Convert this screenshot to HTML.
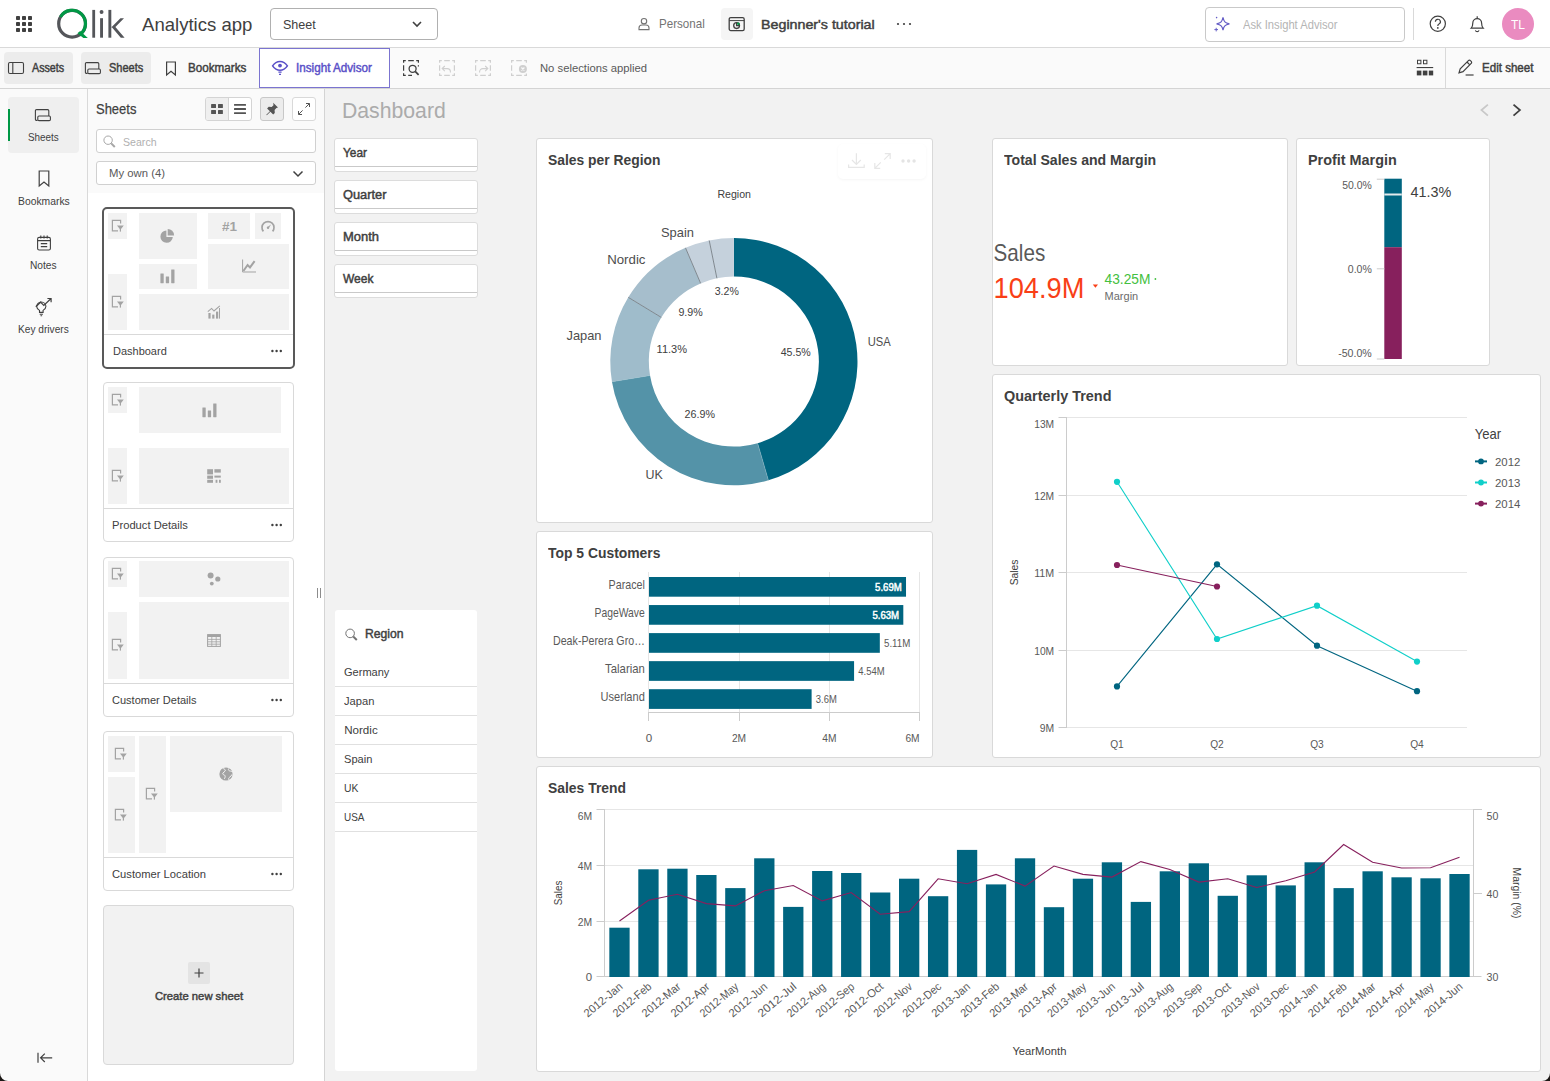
<!DOCTYPE html>
<html lang="en"><head><meta charset="utf-8"><title>Beginner's tutorial - Dashboard | Qlik Analytics app</title>
<style>
*{box-sizing:border-box;margin:0;padding:0}
html,body{width:1550px;height:1081px;overflow:hidden;background:#f2f2f2}
body{font-family:"Liberation Sans",sans-serif;color:#404040;position:relative}
.a{position:absolute}
.t{position:absolute;white-space:nowrap;transform-origin:0 0}
svg{position:absolute;overflow:visible}
svg text{font-family:"Liberation Sans",sans-serif}
#topbar{left:0;top:0;width:1550px;height:48px;background:#fff;border-bottom:1px solid #d9d9d9}
#toolbar{left:0;top:48px;width:1550px;height:41px;background:#fafafa;border-bottom:1px solid #d4d4d4}
#nav{left:0;top:89px;width:88px;height:992px;background:#fafafa;border-right:1px solid #d9d9d9}
#sheets{left:88px;top:89px;width:237px;height:992px;background:#fff;border-right:1px solid #d4d4d4}
#sheetshead{left:0;top:0;width:236px;height:104px;background:#fafafa}
#main{left:325px;top:89px;width:1225px;height:992px;background:#f2f2f2}
.btn{border-radius:4px;background:#ececec}
.box{background:#fff;border:1px solid #c4c4c4;border-radius:4px}
.card{background:#fff;border:1px solid #d9d9d9;border-radius:4px}
.cell{background:#f2f2f2}
.panel{background:#fff;border:1px solid #d9d9d9;border-radius:3px}
.filter{background:#fff;border:1px solid #dcdcdc;border-radius:3px}
.filter i{position:absolute;left:0;right:0;top:27px;height:1px;background:#c9c9c9}
.row{position:absolute;left:0;width:142px;height:1px;background:#e0e0e0}
</style></head><body>

<div id="topbar" class="a">
<svg width="48" height="48" style="left:0;top:0" fill="#404040"><rect x="16" y="16" width="4" height="4" rx="0.8"/><rect x="16" y="22" width="4" height="4" rx="0.8"/><rect x="16" y="28" width="4" height="4" rx="0.8"/><rect x="22" y="16" width="4" height="4" rx="0.8"/><rect x="22" y="22" width="4" height="4" rx="0.8"/><rect x="22" y="28" width="4" height="4" rx="0.8"/><rect x="28" y="16" width="4" height="4" rx="0.8"/><rect x="28" y="22" width="4" height="4" rx="0.8"/><rect x="28" y="28" width="4" height="4" rx="0.8"/></svg>
<svg width="80" height="48" style="left:50px;top:0">
<circle cx="22.1" cy="23.7" r="13.4" fill="none" stroke="#54565a" stroke-width="3.2"/>
<path d="M10.5 17.0 A13.4 13.4 0 1 1 29.6 34.8" fill="none" stroke="#009845" stroke-width="3.2"/>
<path d="M27.4 33.2 L30.2 31 L37.8 37.900 L33.4 37.900Z" fill="#009845"/>
<g fill="#54565a"><rect x="42.3" y="9.9" width="2.8" height="27.8"/><rect x="50.1" y="18.2" width="2.9" height="19.5"/><circle cx="51.55" cy="12" r="1.95"/><rect x="58.4" y="9.9" width="2.9" height="27.8"/>
<path d="M61.2 27.6 L70.4 18.2 L74 18.2 L65.4 27.1 L74.6 37.7 L70.8 37.7 L61.2 26.4z"/></g>
</svg>
<span class="t" style="left:142.30px;top:15px;font-size:19px;line-height:19px;transform:scaleX(0.9769);">Analytics app</span>
<div class="a box" style="left:270px;top:8px;width:168px;height:32px;border-color:#b0b0b0"></div>
<span class="t" style="left:283.00px;top:18px;font-size:13.4px;line-height:13.4px;transform:scaleX(0.9366);">Sheet</span>
<svg width="12" height="8" style="left:411px;top:20px"><path d="M2 2 L6 6 L10 2" fill="none" stroke="#404040" stroke-width="1.6"/></svg>
<svg width="14" height="14" style="left:637px;top:17px" fill="none" stroke="#737373" stroke-width="1.1"><circle cx="7" cy="4.2" r="2.7"/><path d="M2 12.6 v-1.6 a3 3 0 0 1 3 -3 h4 a3 3 0 0 1 3 3 v1.6z"/></svg>
<span class="t" style="left:658.70px;top:18px;font-size:12.4px;line-height:12.4px;color:#737373;transform:scaleX(0.9358);">Personal</span>
<div class="a" style="left:721px;top:8px;width:32px;height:32px;border-radius:4px;background:#f5f5f5"></div>
<svg width="18" height="16" style="left:728px;top:16px" fill="none" stroke="#404040" stroke-width="1.3"><rect x="1.2" y="1.6" width="15" height="13" rx="1.6"/><path d="M1.2 4.6h15" stroke-width="1"/><circle cx="8.6" cy="9.6" r="2.9"/><path d="M8.6 6.7v2.9h2.9" /><circle cx="10.4" cy="7.8" r="1.3" fill="#009845" stroke="none"/></svg>
<span class="t" style="left:761.20px;top:18px;font-size:13.4px;line-height:13.4px;-webkit-text-stroke:0.45px;transform:scaleX(1.0651);">Beginner&#x27;s tutorial</span>
<svg width="20" height="6" style="left:895px;top:21px" fill="#404040"><circle cx="3" cy="3" r="1.1"/><circle cx="9" cy="3" r="1.1"/><circle cx="15" cy="3" r="1.1"/></svg>
<div class="a box" style="left:1205px;top:7px;width:200px;height:35px;border-color:#c9c9c9"></div>
<svg width="20" height="20" style="left:1212px;top:14px" fill="none" stroke="#655dc6" stroke-width="1.2"><path d="M11 3.4 C11.8 7.6 13 8.8 17.4 9.8 C13 10.8 11.8 12 11 16.2 C10.2 12 9 10.8 4.6 9.8 C9 8.8 10.2 7.6 11 3.4z"/><path d="M2.4 15.6h3.6M4.2 13.8v3.6" stroke-width="1"/><circle cx="4.6" cy="3.6" r="0.8" fill="#655dc6" stroke="none"/></svg>
<span class="t" style="left:1242.80px;top:19px;font-size:12.4px;line-height:12.4px;color:#b5b5b5;transform:scaleX(0.9030);">Ask Insight Advisor</span>
<div class="a" style="left:1413px;top:8px;width:1px;height:32px;background:#d9d9d9"></div>
<svg width="20" height="20" style="left:1428px;top:14px" fill="none" stroke="#404040" stroke-width="1.2"><circle cx="9.8" cy="9.8" r="7.6"/><path d="M7.4 7.8a2.5 2.5 0 1 1 3.6 2.2c-.9.5-1.2.9-1.2 1.9" /><circle cx="9.8" cy="13.9" r="0.9" fill="#404040" stroke="none"/></svg>
<svg width="18" height="20" style="left:1468px;top:14px" fill="none" stroke="#404040" stroke-width="1.2"><path d="M3.2 14.2c1.2-1.2 1.6-2.6 1.6-5.2a4.4 4.4 0 0 1 8.8 0c0 2.6.4 4 1.6 5.2z"/><path d="M7.4 16.4a1.9 1.9 0 0 0 3.6 0" /><path d="M9.2 2.2v2" /></svg>
<div class="a" style="left:1502px;top:8px;width:32px;height:32px;border-radius:16px;background:#ea8bc0"></div>
<span class="t" style="left:1510.80px;top:19px;font-size:12.6px;line-height:12.6px;color:#fff;transform:scaleX(0.9521);">TL</span>
</div>
<div id="toolbar" class="a">
<div class="a btn" style="left:4px;top:4px;width:69px;height:32px"></div>
<svg width="18" height="14" style="left:7px;top:13px" fill="none" stroke="#404040" stroke-width="1.1"><rect x="1.5" y="1.5" width="15" height="11" rx="1.4"/><path d="M5.8 1.5v11"/></svg>
<span class="t" style="left:32.00px;top:14px;font-size:12.2px;line-height:12.2px;-webkit-text-stroke:0.45px;transform:scaleX(0.8795);">Assets</span>
<div class="a btn" style="left:81px;top:4px;width:70px;height:32px"></div>
<svg width="18" height="14" style="left:84px;top:13px" fill="none" stroke="#404040" stroke-width="1.1"><path d="M3.6 12.4h-1a1.2 1.2 0 0 1-1.2-1.2v-8.4a1.2 1.2 0 0 1 1.2-1.2h11a1.2 1.2 0 0 1 1.2 1.2v5.2"/><rect x="3.8" y="8" width="12.6" height="4.6" rx="1.2"/></svg>
<span class="t" style="left:108.70px;top:14px;font-size:12.2px;line-height:12.2px;-webkit-text-stroke:0.45px;transform:scaleX(0.9030);">Sheets</span>
<svg width="12" height="16" style="left:165px;top:13px" fill="none" stroke="#404040" stroke-width="1.2"><path d="M1.6 1h8.8v13l-4.4-3.6-4.4 3.6z"/></svg>
<span class="t" style="left:187.50px;top:14px;font-size:12.2px;line-height:12.2px;-webkit-text-stroke:0.45px;transform:scaleX(0.9571);">Bookmarks</span>
<div class="a" style="left:259px;top:0px;width:131px;height:40px;background:#fff;border:1px solid #7b74d0"></div>
<svg width="18" height="18" style="left:271px;top:11px" fill="none" stroke="#5a50c8" stroke-width="1.5"><path d="M1.6 6.8c2-3 4.6-4.4 7.4-4.4s5.4 1.4 7.4 4.4c-2 3-4.6 4.4-7.4 4.4s-5.400-1.400-7.400-4.400z"/><circle cx="9" cy="6.600" r="1.900" fill="#5a50c8" stroke="none"/><path d="M7.4 13.2h3.200M8 15.400h2" stroke-width="1.200"/></svg>
<span class="t" style="left:296.40px;top:14px;font-size:12.2px;line-height:12.2px;-webkit-text-stroke:0.45px;color:#5a50c8;transform:scaleX(0.9579);">Insight Advisor</span>
<svg width="18" height="18" style="left:403px;top:12px" fill="none" stroke="#404040" stroke-width="1.2"><path d="M.6 2.8V.6H2.8M5.2 .6H10.8M13.2 .6H15.4V2.8M15.4 5.2V6.4M9 15.4H5.2M2.8 15.4H.6V13.2M.6 10.800V5.2"/><circle cx="9.6" cy="8.800" r="3.500" stroke-width="1.300"/><path d="M12.200 11.400l3.400 3.400" stroke-width="1.700"/></svg>
<svg width="18" height="18" style="left:439px;top:12px" fill="none" stroke="#cfcfcf" stroke-width="1.2"><path d="M.6 2.8V.6H2.8M5.2 .6H10.8M13.2 .6H15.4V2.8M15.4 5.2V10.8M15.4 13.2V15.4H13.2M10.8 15.4H5.2M2.8 15.4H.6V13.2M.6 10.800V5.2"/><path d="M5.800 6l-2.600 2.600 2.600 2.600M3.400 8.600h4.800a3.200 3.200 0 0 1 3.200 3.200v.6" stroke-width="1.100"/></svg>
<svg width="18" height="18" style="left:475px;top:12px" fill="none" stroke="#cfcfcf" stroke-width="1.2"><path d="M.6 2.8V.6H2.8M5.2 .6H10.8M13.2 .6H15.4V2.8M15.4 5.2V10.8M15.4 13.2V15.4H13.2M10.8 15.4H5.2M2.8 15.4H.6V13.2M.6 10.800V5.2"/><path d="M10.200 6l2.600 2.600-2.600 2.600M12.600 8.600h-4.800a3.200 3.200 0 0 0-3.200 3.200v.6" stroke-width="1.100"/></svg>
<svg width="18" height="18" style="left:511px;top:12px" fill="none" stroke="#cfcfcf" stroke-width="1.2"><path d="M.6 2.8V.6H2.8M5.2 .6H10.8M13.2 .6H15.4V2.8M15.4 13.600V15.4H13.2M10.8 15.4H5.2M2.8 15.4H.6V13.2M.6 10.800V5.2"/><circle cx="11.900" cy="9" r="4" fill="#cfcfcf" stroke="none"/><path d="M10.400 7.500l3 3M13.400 7.500l-3 3" stroke="#fafafa" stroke-width="1.200"/></svg>
<span class="t" style="left:539.60px;top:14px;font-size:11.6px;line-height:11.6px;color:#595959;transform:scaleX(0.9703);">No selections applied</span>
<svg width="18" height="18" style="left:1416px;top:11px" fill="#404040"><path d="M1 .8h4.400v4.400H1zm1 1v2.400h2.400V1.800zM7 .8h4.400v4.400H7zm1 1v2.400h2.400V1.800z"/><rect x="0.600" y="8" width="16.600" height="1.100"/><rect x="0.800" y="11.600" width="4.600" height="4.800"/><rect x="6.800" y="11.600" width="4.600" height="4.800"/><rect x="12.800" y="11.600" width="4.400" height="4.800"/></svg>
<div class="a" style="left:1445px;top:0;width:1px;height:40px;background:#d9d9d9"></div>
<svg width="18" height="18" style="left:1457px;top:11px" fill="none" stroke="#404040" stroke-width="1.200"><path d="M2 13.800l1.200-4 8.200-8.200a1.400 1.400 0 0 1 2 0l.8.800a1.400 1.400 0 0 1 0 2l-8.200 8.200z"/><path d="M10 3l2.800 2.800"/><path d="M8.600 16h8"/></svg>
<span class="t" style="left:1481.80px;top:14px;font-size:12.2px;line-height:12.2px;-webkit-text-stroke:0.45px;transform:scaleX(0.9492);">Edit sheet</span>
</div>
<div id="nav" class="a">
<div class="a" style="left:8px;top:8px;width:71px;height:56px;border-radius:4px;background:#efefef"></div>
<div class="a" style="left:8px;top:20px;width:2px;height:32px;background:#009845"></div>
<svg width="18" height="14" style="left:34px;top:19px" fill="none" stroke="#404040" stroke-width="1.100"><path d="M3.600 12.400h-1a1.200 1.200 0 0 1-1.200-1.200v-8.400a1.200 1.200 0 0 1 1.200-1.200h11a1.200 1.200 0 0 1 1.200 1.200v5.200"/><rect x="3.800" y="8" width="12.600" height="4.600" rx="1.200"/></svg>
<span class="t" style="left:28.20px;top:43px;font-size:11.4px;line-height:11.4px;transform:scaleX(0.8678);">Sheets</span>
<svg width="12" height="18" style="left:37.500px;top:81px" fill="none" stroke="#404040" stroke-width="1.200"><path d="M1.200 1h9.600v15l-4.800-4-4.800 4z"/></svg>
<span class="t" style="left:17.50px;top:107px;font-size:11.4px;line-height:11.4px;transform:scaleX(0.9085);">Bookmarks</span>
<svg width="16" height="18" style="left:35.500px;top:144.5px" fill="none" stroke="#404040" stroke-width="1.100"><rect x="1.600" y="3.400" width="12.800" height="12.600" rx="1.600"/><path d="M1.600 6.600h12.800M4.800 1.600v2.800M8 1.600v2.800M11.200 1.600v2.800M4.800 9.600h6.400M4.800 12.600h6.400"/></svg>
<span class="t" style="left:30.30px;top:171px;font-size:11.4px;line-height:11.4px;transform:scaleX(0.8932);">Notes</span>
<svg width="18" height="20" style="left:34.500px;top:207.5px" fill="none" stroke="#404040" stroke-width="1.100"><path d="M4.500 15.400V13.400C2.800 12.400 1.700 11 1.700 9.600A4.600 4.600 0 0 1 10.900 9.600C10.900 11 9.800 12.400 8.100 13.400V15.400ZM4.700 17.200h3.200M5.500 18.800h1.600"/><path d="M.800 9.800l4.700-4.600 3.300 3.300 7-6.700M12.400 1.500h3.700v3.700" stroke-width="1.200"/></svg>
<span class="t" style="left:18.20px;top:235px;font-size:11.4px;line-height:11.4px;transform:scaleX(0.8909);">Key drivers</span>
<svg width="16" height="12" style="left:36.500px;top:962.5px" fill="none" stroke="#404040" stroke-width="1.200"><path d="M1 .800v10M3.600 5.800h11.600M7.800 1.600L3.600 5.800l4.200 4.200"/></svg>
</div>
<div id="sheets" class="a">
<div id="sheetshead" class="a"></div>
<span class="t" style="left:8.00px;top:12px;font-size:15px;line-height:15px;transform:scaleX(0.8651);-webkit-text-stroke:0.25px;">Sheets</span>
<div class="a " style="left:117.0px;top:8.0px;width:47.0px;height:24.0px;border:1px solid #d4d4d4;border-radius:3px;background:#fff"></div>
<div class="a " style="left:118.0px;top:9.0px;width:23.0px;height:22.0px;background:#efefef;border-radius:2px 0 0 2px;border-right:1px solid #d4d4d4"></div>
<svg width="14" height="12" style="left:123.0px;top:15.0px" fill="#545454"><rect x="0.100" y="0" width="4.900" height="3.900" rx=".5"/><rect x="7" y="0" width="4.900" height="3.900" rx=".5"/><rect x="0.100" y="6" width="4.900" height="3.900" rx=".5"/><rect x="7" y="6" width="4.900" height="3.900" rx=".5"/></svg>
<svg width="14" height="12" style="left:146.0px;top:15.0px" fill="#545454"><rect x="0" y="0" width="12" height="1.850" rx=".5"/><rect x="0" y="4.100" width="12" height="1.850" rx=".5"/><rect x="0" y="8.200" width="12" height="1.850" rx=".5"/></svg>
<div class="a " style="left:172.0px;top:8.0px;width:24.0px;height:24.0px;border:1px solid #c8c8c8;border-radius:3px;background:#ececec"></div>
<svg width="14" height="14" style="left:176.8px;top:13.0px" fill="#545454"><path d="M8.200 .800l4.800 4.800-1.600.500-1.800 1.800.200 3-1.600 1.600-2.800-2.800-3.600 3.600-.500-.500 3.600-3.600-2.800-2.800 1.600-1.600 3 .200 1.800-1.800z"/></svg>
<div class="a " style="left:204.0px;top:8.0px;width:24.0px;height:24.0px;border:1px solid #d9d9d9;border-radius:3px;background:#fff"></div>
<svg width="14" height="14" style="left:209.0px;top:13.0px" fill="none" stroke="#545454" stroke-width="1"><path d="M9 1.500h3.500v3.500M12.300 1.700L8.400 5.600M5 12.500H1.500V9M1.700 12.300L5.600 8.400"/></svg>
<div class="a box" style="left:8.0px;top:40.0px;width:220.0px;height:24.0px;border-color:#d0d0d0;border-radius:3px"></div>
<svg width="14" height="14" style="left:15.0px;top:45.5px" fill="none" stroke="#a6a6a6" stroke-width="1"><circle cx="5.100" cy="5.200" r="4.200"/><path d="M8.200 8.400l3.600 3.600" stroke-width="2"/></svg>
<span class="t" style="left:35.30px;top:48px;font-size:11.4px;line-height:11.4px;color:#b0b0b0;transform:scaleX(0.9302);">Search</span>
<div class="a box" style="left:8.0px;top:72.0px;width:220.0px;height:24.0px;border-color:#d0d0d0;border-radius:3px"></div>
<span class="t" style="left:21.20px;top:78px;font-size:11.6px;line-height:11.6px;color:#595959;transform:scaleX(0.9762);">My own (4)</span>
<svg width="12" height="8" style="left:203.5px;top:80.5px" fill="none" stroke="#404040" stroke-width="1.500"><path d="M1.500 1.500L6 6l4.500-4.500"/></svg>
<div class="a " style="left:14.0px;top:118.0px;width:193.0px;height:162.0px;border:2px solid #595959;border-radius:5px;background:#fff"></div>
<div class="a cell" style="left:20.0px;top:124.0px;width:19.2px;height:26.2px;"></div><svg width="14" height="14" style="left:22.6px;top:130.1px" ><path d="M9.600 4.600V1.400H1.400v10.400h5.600" fill="none" stroke="#a3a3a3" stroke-width="1.200"/><path d="M6 6.400h6.800l-3.400 4.400z" fill="#a3a3a3"/><rect x="8.800" y="9" width="1.200" height="3.600" fill="#a3a3a3"/></svg>
<div class="a cell" style="left:50.8px;top:124.0px;width:57.9px;height:46.2px;"></div><svg width="15" height="15" style="left:72.2px;top:140.1px" ><path d="M6.400 1.400a6.200 6.200 0 1 0 6.400 6.500H6.400z" fill="#a3a3a3"/><path d="M7.700 0a6.400 6.400 0 0 1 6.400 6.400H7.700z" fill="#a3a3a3"/></svg>
<div class="a cell" style="left:120.3px;top:124.0px;width:42.2px;height:26.2px;"></div><span class="t" style="left:133.90px;top:132px;font-size:12.6px;line-height:12.6px;font-weight:700;color:#a3a3a3;transform:scaleX(1.0702);">#1</span>
<div class="a cell" style="left:166.7px;top:124.0px;width:26.6px;height:26.2px;"></div><svg width="14" height="14" style="left:173.0px;top:130.1px" ><path d="M2.400 12.400a6 6 0 1 1 9.200 0" fill="none" stroke="#a3a3a3" stroke-width="1.700"/><path d="M6 8.600l4.200-3.400-2.600 4.400z" fill="#a3a3a3"/><circle cx="7" cy="8.800" r="1.200" fill="#a3a3a3"/></svg>
<div class="a cell" style="left:120.3px;top:154.7px;width:80.7px;height:45.5px;"></div><svg width="16" height="14" style="left:152.7px;top:170.4px" ><path d="M1.600 .500v12.500h13.400" fill="none" stroke="#a3a3a3" stroke-width="1"/><path d="M2.400 12l4.200-6 2.400 2.400 4.600-6.200" fill="none" stroke="#a3a3a3" stroke-width="2"/></svg>
<div class="a cell" style="left:50.8px;top:174.7px;width:57.9px;height:25.5px;"></div><svg width="15" height="15" style="left:72.2px;top:179.8px" ><rect x=".400" y="4.400" width="3.300" height="9.800" rx=".4" fill="#a3a3a3"/><rect x="5.800" y="7.400" width="3.300" height="6.800" rx=".4" fill="#a3a3a3"/><rect x="11.200" y=".400" width="3.300" height="13.800" rx=".4" fill="#a3a3a3"/></svg>
<div class="a cell" style="left:20.0px;top:184.7px;width:19.2px;height:56.0px;"></div><svg width="14" height="14" style="left:22.6px;top:205.7px" ><path d="M9.600 4.600V1.400H1.400v10.400h5.600" fill="none" stroke="#a3a3a3" stroke-width="1.200"/><path d="M6 6.400h6.800l-3.400 4.400z" fill="#a3a3a3"/><rect x="8.800" y="9" width="1.200" height="3.600" fill="#a3a3a3"/></svg>
<div class="a cell" style="left:50.8px;top:205.2px;width:150.2px;height:35.5px;"></div><svg width="14" height="14" style="left:118.9px;top:215.9px" ><rect x="1.400" y="8" width="2.200" height="5.600" fill="#a3a3a3"/><rect x="5.200" y="9.600" width="2.200" height="4" fill="#a3a3a3"/><rect x="9" y="6.600" width="2.200" height="7" fill="#a3a3a3"/><path d="M.800 6.600l3.800-3.200 2.400 2.600 5.800-5.200" fill="none" stroke="#a3a3a3" stroke-width="1.100"/><rect x="12" y="3" width="1" height="10.600" fill="#a3a3a3"/></svg>
<div class="a " style="left:16.0px;top:245.0px;width:189.0px;height:1.0px;background:#d9d9d9"></div>
<span class="t" style="left:24.50px;top:257px;font-size:11.4px;line-height:11.4px;transform:scaleX(0.9646);">Dashboard</span>
<svg width="12" height="4" style="left:183.2px;top:260.0px" fill="#404040"><circle cx="1.400" cy="2" r="1.200"/><circle cx="5.600" cy="2" r="1.200"/><circle cx="9.800" cy="2" r="1.200"/></svg>
<div class="a card" style="left:15.0px;top:293.0px;width:191.0px;height:160.0px;"></div>
<div class="a cell" style="left:20.2px;top:298.3px;width:18.7px;height:25.3px;"></div><svg width="14" height="14" style="left:22.6px;top:304.0px" ><path d="M9.600 4.600V1.400H1.400v10.400h5.600" fill="none" stroke="#a3a3a3" stroke-width="1.200"/><path d="M6 6.400h6.800l-3.400 4.400z" fill="#a3a3a3"/><rect x="8.800" y="9" width="1.200" height="3.600" fill="#a3a3a3"/></svg>
<div class="a cell" style="left:50.5px;top:298.3px;width:142.9px;height:46.0px;"></div><svg width="15" height="15" style="left:114.3px;top:313.7px" ><rect x=".400" y="4.400" width="3.300" height="9.800" rx=".4" fill="#a3a3a3"/><rect x="5.800" y="7.400" width="3.300" height="6.800" rx=".4" fill="#a3a3a3"/><rect x="11.200" y=".400" width="3.300" height="13.800" rx=".4" fill="#a3a3a3"/></svg>
<div class="a cell" style="left:20.2px;top:358.6px;width:18.7px;height:56.3px;"></div><svg width="14" height="14" style="left:22.6px;top:379.8px" ><path d="M9.600 4.600V1.400H1.400v10.400h5.600" fill="none" stroke="#a3a3a3" stroke-width="1.200"/><path d="M6 6.400h6.800l-3.400 4.400z" fill="#a3a3a3"/><rect x="8.800" y="9" width="1.200" height="3.600" fill="#a3a3a3"/></svg>
<div class="a cell" style="left:50.5px;top:358.6px;width:150.5px;height:56.3px;"></div><svg width="14" height="14" style="left:118.8px;top:379.8px" ><rect x=".200" y=".200" width="5.800" height="5.200" fill="#a3a3a3"/><rect x="7.400" y=".200" width="6.400" height="3.400" fill="#a3a3a3"/><rect x=".200" y="6.600" width="5.800" height="3.200" fill="#a3a3a3"/><rect x=".200" y="10.800" width="5.800" height="3" fill="#a3a3a3"/><rect x="7.400" y="6.600" width="6.400" height="2" fill="#a3a3a3"/><rect x="8.600" y="10.800" width="1.800" height="3" fill="#a3a3a3"/><rect x="12" y="10.800" width="1.800" height="3" fill="#a3a3a3"/></svg>
<div class="a " style="left:16.0px;top:419.0px;width:189.0px;height:1.0px;background:#d9d9d9"></div>
<span class="t" style="left:24.20px;top:431px;font-size:11.4px;line-height:11.4px;transform:scaleX(0.9819);">Product Details</span>
<svg width="12" height="4" style="left:183.2px;top:434.0px" fill="#404040"><circle cx="1.400" cy="2" r="1.200"/><circle cx="5.600" cy="2" r="1.200"/><circle cx="9.800" cy="2" r="1.200"/></svg>
<div class="a card" style="left:15.0px;top:467.5px;width:191.0px;height:160.0px;"></div>
<div class="a cell" style="left:20.2px;top:471.8px;width:18.7px;height:26.3px;"></div><svg width="14" height="14" style="left:22.6px;top:478.0px" ><path d="M9.600 4.600V1.400H1.400v10.400h5.600" fill="none" stroke="#a3a3a3" stroke-width="1.200"/><path d="M6 6.400h6.800l-3.400 4.400z" fill="#a3a3a3"/><rect x="8.800" y="9" width="1.200" height="3.600" fill="#a3a3a3"/></svg>
<div class="a cell" style="left:50.5px;top:471.8px;width:150.5px;height:36.6px;"></div><svg width="14" height="14" style="left:118.8px;top:483.1px" ><circle cx="3.600" cy="3.400" r="3" fill="#a3a3a3"/><circle cx="10.800" cy="7" r="2.600" fill="#a3a3a3"/><circle cx="4.800" cy="11.600" r="1.900" fill="#a3a3a3"/></svg>
<div class="a cell" style="left:20.2px;top:523.1px;width:18.7px;height:66.6px;"></div><svg width="14" height="14" style="left:22.6px;top:549.4px" ><path d="M9.600 4.600V1.400H1.400v10.400h5.600" fill="none" stroke="#a3a3a3" stroke-width="1.200"/><path d="M6 6.400h6.800l-3.400 4.400z" fill="#a3a3a3"/><rect x="8.800" y="9" width="1.200" height="3.600" fill="#a3a3a3"/></svg>
<div class="a cell" style="left:50.5px;top:513.1px;width:150.5px;height:76.6px;"></div><svg width="14" height="13" style="left:118.8px;top:544.9px" ><rect x=".600" y=".600" width="12.800" height="11.800" fill="none" stroke="#a3a3a3" stroke-width="1"/><rect x=".600" y=".600" width="12.800" height="2.400" fill="#a3a3a3"/><path d="M.600 5.400h12.800M.600 7.800h12.800M.600 10.200h12.800M4.800 3v9.400M9.200 3v9.400" stroke="#a3a3a3" stroke-width=".800" fill="none"/></svg>
<div class="a " style="left:16.0px;top:594.0px;width:189.0px;height:1.0px;background:#d9d9d9"></div>
<span class="t" style="left:24.20px;top:606px;font-size:11.4px;line-height:11.4px;transform:scaleX(0.9677);">Customer Details</span>
<svg width="12" height="4" style="left:183.2px;top:609.0px" fill="#404040"><circle cx="1.400" cy="2" r="1.200"/><circle cx="5.600" cy="2" r="1.200"/><circle cx="9.800" cy="2" r="1.200"/></svg>
<div class="a card" style="left:15.0px;top:642.0px;width:191.0px;height:160.0px;"></div>
<div class="a cell" style="left:19.9px;top:647.0px;width:27.0px;height:35.8px;"></div><svg width="14" height="14" style="left:26.4px;top:657.9px" ><path d="M9.600 4.600V1.400H1.400v10.400h5.600" fill="none" stroke="#a3a3a3" stroke-width="1.200"/><path d="M6 6.400h6.800l-3.400 4.400z" fill="#a3a3a3"/><rect x="8.800" y="9" width="1.200" height="3.600" fill="#a3a3a3"/></svg>
<div class="a cell" style="left:19.9px;top:687.8px;width:27.0px;height:75.8px;"></div><svg width="14" height="14" style="left:26.4px;top:718.7px" ><path d="M9.600 4.600V1.400H1.400v10.400h5.600" fill="none" stroke="#a3a3a3" stroke-width="1.200"/><path d="M6 6.400h6.800l-3.400 4.400z" fill="#a3a3a3"/><rect x="8.800" y="9" width="1.200" height="3.600" fill="#a3a3a3"/></svg>
<div class="a cell" style="left:50.6px;top:647.0px;width:27.1px;height:116.6px;"></div><svg width="14" height="14" style="left:57.1px;top:698.3px" ><path d="M9.600 4.600V1.400H1.400v10.400h5.600" fill="none" stroke="#a3a3a3" stroke-width="1.200"/><path d="M6 6.400h6.800l-3.400 4.400z" fill="#a3a3a3"/><rect x="8.800" y="9" width="1.200" height="3.600" fill="#a3a3a3"/></svg>
<div class="a cell" style="left:81.7px;top:647.0px;width:111.9px;height:76.2px;"></div><svg width="14" height="14" style="left:130.7px;top:678.1px" ><circle cx="7" cy="7" r="6.600" fill="#a3a3a3"/><path d="M4.200 1.600c1.600.400 2.400 1.200 2 2.400s-2 1-2.400 2.200.800 1.600 1.800 2 .600 2.400-.200 3.600M9.800 1.400c-.800 1-.400 2 .600 2.400s2 .200 2.600 1.200M10 13c-.600-1.200-.400-2.200.600-2.800s1.800-1.400 2.400-2.800" fill="none" stroke="#f2f2f2" stroke-width="1"/></svg>
<div class="a " style="left:16.0px;top:768.0px;width:189.0px;height:1.0px;background:#d9d9d9"></div>
<span class="t" style="left:24.20px;top:780px;font-size:11.4px;line-height:11.4px;transform:scaleX(0.9824);">Customer Location</span>
<svg width="12" height="4" style="left:183.2px;top:783.0px" fill="#404040"><circle cx="1.400" cy="2" r="1.200"/><circle cx="5.600" cy="2" r="1.200"/><circle cx="9.800" cy="2" r="1.200"/></svg>
<div class="a " style="left:15.0px;top:816.0px;width:191.0px;height:160.0px;background:#f2f2f2;border:1px solid #d9d9d9;border-radius:4px"></div>
<div class="a " style="left:99.7px;top:873.2px;width:22.4px;height:21.8px;background:#e4e4e4;border-radius:2px"></div>
<svg width="10" height="10" style="left:105.9px;top:879.0px" fill="none" stroke="#404040" stroke-width="1.200"><path d="M5 .500v9M.500 5h9"/></svg>
<span class="t" style="left:66.60px;top:902px;font-size:11.4px;line-height:11.4px;-webkit-text-stroke:0.45px;transform:scaleX(0.9871);">Create new sheet</span>
<div class="a " style="left:229.0px;top:499.0px;width:1.0px;height:10.0px;background:#8c8c8c"></div>
<div class="a " style="left:232.0px;top:499.0px;width:1.0px;height:10.0px;background:#8c8c8c"></div>
</div>
<div id="main" class="a">
<span class="t" style="left:17.00px;top:11px;font-size:22.6px;line-height:22.6px;color:#ababab;transform:scaleX(0.9388);">Dashboard</span>
<svg width="10" height="14" style="left:1155px;top:14px" fill="none" stroke="#c8c8c8" stroke-width="1.800"><path d="M7.900 1.600L1.500 7.100l6.400 5.500"/></svg>
<svg width="10" height="14" style="left:1186px;top:14px" fill="none" stroke="#404040" stroke-width="1.800"><path d="M2.500 1.600L8.900 7.100l-6.400 5.500"/></svg>
<div class="a filter" style="left:9px;top:49px;width:144px;height:34px"><i></i></div>
<span class="t" style="left:18.00px;top:58px;font-size:12.4px;line-height:12.4px;-webkit-text-stroke:0.45px;transform:scaleX(0.9579);">Year</span>
<div class="a filter" style="left:9px;top:91px;width:144px;height:34px"><i></i></div>
<span class="t" style="left:18.00px;top:100px;font-size:12.4px;line-height:12.4px;-webkit-text-stroke:0.45px;transform:scaleX(1.0348);">Quarter</span>
<div class="a filter" style="left:9px;top:133px;width:144px;height:34px"><i></i></div>
<span class="t" style="left:18.00px;top:142px;font-size:12.4px;line-height:12.4px;-webkit-text-stroke:0.45px;transform:scaleX(1.0446);">Month</span>
<div class="a filter" style="left:9px;top:175px;width:144px;height:34px"><i></i></div>
<span class="t" style="left:18.00px;top:184px;font-size:12.4px;line-height:12.4px;-webkit-text-stroke:0.45px;transform:scaleX(0.9691);">Week</span>
<div class="a" style="left:10px;top:521px;width:142px;height:461px;background:#fff;border-radius:3px">
<div class="row" style="top:76.0px"></div>
<div class="row" style="top:105.0px"></div>
<div class="row" style="top:134.0px"></div>
<div class="row" style="top:163.0px"></div>
<div class="row" style="top:192.0px"></div>
<div class="row" style="top:221.0px"></div>
</div>
<svg width="14" height="14" style="left:19.5px;top:538.5px" fill="none" stroke="#737373" stroke-width="1"><circle cx="5.100" cy="5.400" r="4.300"/><path d="M8.200 8.600l3.600 3.400" stroke-width="2"/></svg>
<span class="t" style="left:40.00px;top:539px;font-size:12.4px;line-height:12.4px;-webkit-text-stroke:0.45px;transform:scaleX(0.9823);">Region</span>
<span class="t" style="left:19.20px;top:577px;font-size:11.6px;line-height:11.6px;transform:scaleX(0.9517);">Germany</span>
<span class="t" style="left:19.20px;top:606px;font-size:11.6px;line-height:11.6px;transform:scaleX(0.9618);">Japan</span>
<span class="t" style="left:19.20px;top:635px;font-size:11.6px;line-height:11.6px;">Nordic</span>
<span class="t" style="left:19.20px;top:664px;font-size:11.6px;line-height:11.6px;transform:scaleX(0.9572);">Spain</span>
<span class="t" style="left:19.20px;top:693px;font-size:11.6px;line-height:11.6px;transform:scaleX(0.8936);">UK</span>
<span class="t" style="left:19.20px;top:722px;font-size:11.6px;line-height:11.6px;transform:scaleX(0.8553);">USA</span>
<div class="a panel" style="left:211.0px;top:49.0px;width:397.0px;height:385.0px;"></div><span class="t" style="left:223.00px;top:64px;font-size:14.8px;line-height:14.8px;font-weight:700;transform:scaleX(0.9368);">Sales per Region</span>
<div class="a panel" style="left:211.0px;top:442.0px;width:397.0px;height:227.0px;"></div><span class="t" style="left:223.00px;top:457px;font-size:14.8px;line-height:14.8px;font-weight:700;transform:scaleX(0.9391);">Top 5 Customers</span>
<div class="a panel" style="left:667.0px;top:49.0px;width:296.0px;height:228.0px;"></div><span class="t" style="left:679.00px;top:64px;font-size:14.8px;line-height:14.8px;font-weight:700;transform:scaleX(0.9507);">Total Sales and Margin</span>
<div class="a panel" style="left:971.0px;top:49.0px;width:194.0px;height:228.0px;"></div><span class="t" style="left:983.00px;top:64px;font-size:14.8px;line-height:14.8px;font-weight:700;transform:scaleX(0.9730);">Profit Margin</span>
<div class="a panel" style="left:667.0px;top:285.0px;width:549.0px;height:384.0px;"></div><span class="t" style="left:679.00px;top:300px;font-size:14.8px;line-height:14.8px;font-weight:700;transform:scaleX(0.9754);">Quarterly Trend</span>
<div class="a panel" style="left:211.0px;top:677.0px;width:1005.0px;height:306.0px;"></div><span class="t" style="left:223.00px;top:692px;font-size:14.8px;line-height:14.8px;font-weight:700;transform:scaleX(0.9388);">Sales Trend</span>
<div class="a " style="left:513.0px;top:55.0px;width:88.0px;height:35.0px;background:#fff;border-radius:5px;box-shadow:0 1px 3px rgba(0,0,0,.045)"></div>
<svg width="80" height="20" style="left:521px;top:62px" fill="none" stroke="#e6e6e6" stroke-width="1.200">
<path d="M10.400 2.200V13.200M6 9l4.400 4.400 4.400-4.400M2.600 13.400v3h15.600v-3"/>
<path d="M38.800 2.600h5.400v5.400M44 2.800l-5.800 5.800M28.800 12v5.400h5.400M29 17.200l5.800-5.800"/>
</svg>
<svg width="20" height="6" style="left:575px;top:69px" fill="#e4e4e4"><circle cx="3" cy="3" r="1.700"/><circle cx="8.600" cy="3" r="1.700"/><circle cx="14.100" cy="3" r="1.700"/></svg>
<svg width="1225" height="992" style="left:0;top:0"><path d="M408.90 149.00A123.6 123.6 0 0 1 443.38 391.29L432.61 354.22A85.0 85.0 0 0 0 408.90 187.60Z" fill="#006580"/>
<path d="M443.38 391.29A123.6 123.6 0 0 1 286.95 292.70L325.03 286.42A85.0 85.0 0 0 0 432.61 354.22Z" fill="#5493a8"/>
<path d="M286.95 292.70A123.6 123.6 0 0 1 303.31 208.35L336.29 228.42A85.0 85.0 0 0 0 325.03 286.42Z" fill="#9fbccb"/>
<path d="M303.31 208.35A123.6 123.6 0 0 1 360.53 158.86L375.63 194.38A85.0 85.0 0 0 0 336.29 228.42Z" fill="#a6becc"/>
<path d="M360.53 158.86A123.6 123.6 0 0 1 384.22 151.49L391.92 189.31A85.0 85.0 0 0 0 375.63 194.38Z" fill="#c5d1dc"/>
<path d="M384.22 151.49A123.6 123.6 0 0 1 408.90 149.00L408.90 187.60A85.0 85.0 0 0 0 391.92 189.31Z" fill="#c5d1dc"/>
<path d="M443.38 391.29L432.61 354.22" stroke="#7fb0c0" stroke-width="0.6" fill="none"/>
<path d="M286.95 292.70L325.03 286.42" stroke="#9bbfcc" stroke-width="0.6" fill="none"/>
<path d="M303.31 208.35L336.29 228.42" stroke="#7f888f" stroke-width="1" fill="none"/>
<path d="M360.53 158.86L375.63 194.38" stroke="#7f888f" stroke-width="1" fill="none"/>
<path d="M384.22 151.49L391.92 189.31" stroke="#7f888f" stroke-width="1" fill="none"/>
<text x="392.40" y="109.00" font-size="11.6" fill="#404040" textLength="33.60" lengthAdjust="spacingAndGlyphs">Region</text>
<text x="542.80" y="256.60" font-size="13" fill="#4d4d4d" textLength="23.00" lengthAdjust="spacingAndGlyphs">USA</text>
<text x="336.00" y="147.80" font-size="13" fill="#4d4d4d" textLength="33.00" lengthAdjust="spacingAndGlyphs">Spain</text>
<text x="282.20" y="174.50" font-size="13" fill="#4d4d4d" textLength="38.30" lengthAdjust="spacingAndGlyphs">Nordic</text>
<text x="241.50" y="250.70" font-size="13" fill="#4d4d4d" textLength="35.00" lengthAdjust="spacingAndGlyphs">Japan</text>
<text x="320.50" y="390.00" font-size="13" fill="#4d4d4d" textLength="17.30" lengthAdjust="spacingAndGlyphs">UK</text>
<text x="455.70" y="266.80" font-size="11.4" fill="#404040" textLength="30.10" lengthAdjust="spacingAndGlyphs">45.5%</text>
<text x="389.70" y="206.00" font-size="11.4" fill="#404040" textLength="24.10" lengthAdjust="spacingAndGlyphs">3.2%</text>
<text x="353.40" y="226.90" font-size="11.4" fill="#404040" textLength="24.30" lengthAdjust="spacingAndGlyphs">9.9%</text>
<text x="331.60" y="263.60" font-size="11.4" fill="#404040" textLength="30.40" lengthAdjust="spacingAndGlyphs">11.3%</text>
<text x="359.60" y="328.70" font-size="11.4" fill="#404040" textLength="30.40" lengthAdjust="spacingAndGlyphs">26.9%</text>
<rect x="323" y="483" width="1" height="140" fill="#e6e6e6"/>
<rect x="414" y="483" width="1" height="140" fill="#e6e6e6"/>
<rect x="504" y="483" width="1" height="140" fill="#e6e6e6"/>
<rect x="594" y="483" width="1" height="140" fill="#e6e6e6"/>
<rect x="324.00" y="488.00" width="257.02" height="19.700" fill="#006580"/>
<text x="283.60" y="500.00" font-size="12.2" fill="#595959" textLength="36.20" lengthAdjust="spacingAndGlyphs">Paracel</text>
<text x="550.12" y="502.00" font-size="10.2" fill="#ffffff" textLength="26.70" lengthAdjust="spacingAndGlyphs" stroke="#ffffff" stroke-width="0.45">5.69M</text>
<rect x="324.00" y="516.05" width="254.31" height="19.700" fill="#006580"/>
<text x="269.50" y="528.00" font-size="12.2" fill="#595959" textLength="50.30" lengthAdjust="spacingAndGlyphs">PageWave</text>
<text x="547.41" y="530.00" font-size="10.2" fill="#ffffff" textLength="26.70" lengthAdjust="spacingAndGlyphs" stroke="#ffffff" stroke-width="0.45">5.63M</text>
<rect x="324.00" y="544.10" width="230.82" height="19.700" fill="#006580"/>
<text x="228.00" y="556.00" font-size="12.2" fill="#595959" textLength="91.80" lengthAdjust="spacingAndGlyphs">Deak-Perera Gro…</text>
<text x="559.02" y="558.00" font-size="10.2" fill="#595959" textLength="26.30" lengthAdjust="spacingAndGlyphs">5.11M</text>
<rect x="324.00" y="572.15" width="205.07" height="19.700" fill="#006580"/>
<text x="280.10" y="584.00" font-size="12.2" fill="#595959" textLength="39.70" lengthAdjust="spacingAndGlyphs">Talarian</text>
<text x="533.27" y="586.00" font-size="10.2" fill="#595959" textLength="26.30" lengthAdjust="spacingAndGlyphs">4.54M</text>
<rect x="324.00" y="600.20" width="162.61" height="19.700" fill="#006580"/>
<text x="275.60" y="612.00" font-size="12.2" fill="#595959" textLength="44.20" lengthAdjust="spacingAndGlyphs">Userland</text>
<text x="490.81" y="614.00" font-size="10.2" fill="#595959" textLength="21.00" lengthAdjust="spacingAndGlyphs">3.6M</text>
<rect x="323" y="623" width="272" height="1" fill="#cccccc"/>
<rect x="323" y="623" width="1" height="9" fill="#cccccc"/>
<rect x="414" y="623" width="1" height="9" fill="#cccccc"/>
<rect x="504" y="623" width="1" height="9" fill="#cccccc"/>
<rect x="594" y="623" width="1" height="9" fill="#cccccc"/>
<text x="320.77" y="653.00" font-size="11.6" fill="#595959">0</text>
<text x="406.90" y="653.00" font-size="11.6" fill="#595959" textLength="14.20" lengthAdjust="spacingAndGlyphs">2M</text>
<text x="497.30" y="653.00" font-size="11.6" fill="#595959" textLength="14.20" lengthAdjust="spacingAndGlyphs">4M</text>
<text x="580.40" y="653.00" font-size="11.6" fill="#595959" textLength="14.20" lengthAdjust="spacingAndGlyphs">6M</text>
<text x="668.60" y="172.00" font-size="23.4" fill="#595959" textLength="51.60" lengthAdjust="spacingAndGlyphs">Sales</text>
<text x="668.60" y="209.10" font-size="30" fill="#f93f17" textLength="90.80" lengthAdjust="spacingAndGlyphs">104.9M</text>
<path d="M767.8 195.60000000000002h5.2l-2.600 3.200z" fill="#f93f17"/>
<text x="779.60" y="194.60" font-size="14.4" fill="#44c040" textLength="45.80" lengthAdjust="spacingAndGlyphs">43.25M</text>
<circle cx="830.4000000000001" cy="190" r="0.900" fill="#44c040"/>
<text x="779.60" y="211.00" font-size="11.4" fill="#6b6b6b" textLength="33.60" lengthAdjust="spacingAndGlyphs">Margin</text>
<rect x="1059.3" y="89.69999999999999" width="17.500" height="68.500" fill="#006580"/>
<rect x="1059.3" y="158.2" width="17.500" height="111.800" fill="#87205d"/>
<rect x="1059.3" y="104.5" width="17.500" height="2" fill="#e4eaec"/>
<rect x="1051.8" y="89.70" width="7.500" height="1" fill="#cccccc"/>
<rect x="1051.8" y="179.30" width="7.500" height="1" fill="#cccccc"/>
<rect x="1051.8" y="269.50" width="7.500" height="1" fill="#cccccc"/>
<text x="1017.20" y="100.00" font-size="11.2" fill="#595959" textLength="29.60" lengthAdjust="spacingAndGlyphs">50.0%</text>
<text x="1022.80" y="183.80" font-size="11.2" fill="#595959" textLength="24.00" lengthAdjust="spacingAndGlyphs">0.0%</text>
<text x="1013.20" y="267.70" font-size="11.2" fill="#595959" textLength="33.60" lengthAdjust="spacingAndGlyphs">-50.0%</text>
<text x="1085.40" y="107.90" font-size="15" fill="#404040" textLength="40.80" lengthAdjust="spacingAndGlyphs">41.3%</text>
<rect x="742" y="328" width="400" height="1" fill="#e6e6e6"/>
<rect x="733.5" y="328" width="7.5" height="1" fill="#cccccc"/>
<text x="709.20" y="339.00" font-size="11.4" fill="#595959" textLength="20.00" lengthAdjust="spacingAndGlyphs">13M</text>
<rect x="742" y="406" width="400" height="1" fill="#e6e6e6"/>
<rect x="733.5" y="406" width="7.5" height="1" fill="#cccccc"/>
<text x="709.20" y="410.70" font-size="11.4" fill="#595959" textLength="20.00" lengthAdjust="spacingAndGlyphs">12M</text>
<rect x="742" y="483" width="400" height="1" fill="#e6e6e6"/>
<rect x="733.5" y="483" width="7.5" height="1" fill="#cccccc"/>
<text x="709.20" y="487.70" font-size="11.4" fill="#595959" textLength="20.00" lengthAdjust="spacingAndGlyphs">11M</text>
<rect x="742" y="561" width="400" height="1" fill="#e6e6e6"/>
<rect x="733.5" y="561" width="7.5" height="1" fill="#cccccc"/>
<text x="709.20" y="565.70" font-size="11.4" fill="#595959" textLength="20.00" lengthAdjust="spacingAndGlyphs">10M</text>
<rect x="742" y="638" width="400" height="1" fill="#e6e6e6"/>
<rect x="733.5" y="638" width="7.5" height="1" fill="#cccccc"/>
<text x="714.80" y="642.70" font-size="11.4" fill="#595959" textLength="14.40" lengthAdjust="spacingAndGlyphs">9M</text>
<rect x="741" y="328" width="1" height="311" fill="#cccccc"/>
<text x="785.20" y="659.20" font-size="11.4" fill="#595959" textLength="13.60" lengthAdjust="spacingAndGlyphs">Q1</text>
<text x="885.20" y="659.20" font-size="11.4" fill="#595959" textLength="13.60" lengthAdjust="spacingAndGlyphs">Q2</text>
<text x="985.20" y="659.20" font-size="11.4" fill="#595959" textLength="13.60" lengthAdjust="spacingAndGlyphs">Q3</text>
<text x="1085.20" y="659.20" font-size="11.4" fill="#595959" textLength="13.60" lengthAdjust="spacingAndGlyphs">Q4</text>
<polyline points="792.00,597.40 892.00,475.30 992.00,556.70 1092.00,602.20" fill="none" stroke="#006580" stroke-width="1.100"/>
<circle cx="792.00" cy="597.40" r="3.100" fill="#006580"/>
<circle cx="892.00" cy="475.30" r="3.100" fill="#006580"/>
<circle cx="992.00" cy="556.70" r="3.100" fill="#006580"/>
<circle cx="1092.00" cy="602.20" r="3.100" fill="#006580"/>
<polyline points="792.00,392.80 892.00,550.00 992.00,516.70 1092.00,572.60" fill="none" stroke="#10cfc9" stroke-width="1.100"/>
<circle cx="792.00" cy="392.80" r="3.100" fill="#10cfc9"/>
<circle cx="892.00" cy="550.00" r="3.100" fill="#10cfc9"/>
<circle cx="992.00" cy="516.70" r="3.100" fill="#10cfc9"/>
<circle cx="1092.00" cy="572.60" r="3.100" fill="#10cfc9"/>
<polyline points="792.00,476.00 892.00,497.50" fill="none" stroke="#87205d" stroke-width="1.100"/>
<circle cx="792.00" cy="476.00" r="3.100" fill="#87205d"/>
<circle cx="892.00" cy="497.50" r="3.100" fill="#87205d"/>
<g transform="translate(692.6,483.4) rotate(-90)"><text x="-12.90" y="0.00" font-size="10.6" fill="#404040" textLength="25.80" lengthAdjust="spacingAndGlyphs">Sales</text></g>
<text x="1149.80" y="349.50" font-size="14.2" fill="#404040" textLength="26.40" lengthAdjust="spacingAndGlyphs">Year</text>
<rect x="1150" y="371.40" width="12" height="2" fill="#006580"/>
<circle cx="1156" cy="372.40" r="2.900" fill="#006580"/>
<text x="1170.00" y="376.60" font-size="11.2" fill="#595959" textLength="25.40" lengthAdjust="spacingAndGlyphs">2012</text>
<rect x="1150" y="392.50" width="12" height="2" fill="#10cfc9"/>
<circle cx="1156" cy="393.50" r="2.900" fill="#10cfc9"/>
<text x="1170.00" y="397.70" font-size="11.2" fill="#595959" textLength="25.40" lengthAdjust="spacingAndGlyphs">2013</text>
<rect x="1150" y="413.60" width="12" height="2" fill="#87205d"/>
<circle cx="1156" cy="414.60" r="2.900" fill="#87205d"/>
<text x="1170.00" y="418.80" font-size="11.2" fill="#595959" textLength="25.40" lengthAdjust="spacingAndGlyphs">2014</text>
<rect x="280" y="720" width="868" height="1" fill="#e6e6e6"/>
<rect x="280" y="776" width="868" height="1" fill="#e6e6e6"/>
<rect x="280" y="832" width="868" height="1" fill="#e6e6e6"/>
<rect x="271.5" y="887" width="885.0" height="1" fill="#cccccc"/>
<rect x="284.33" y="838.70" width="20.300" height="49.30" fill="#006580"/>
<rect x="313.30" y="780.30" width="20.300" height="107.70" fill="#006580"/>
<rect x="342.27" y="779.70" width="20.300" height="108.30" fill="#006580"/>
<rect x="371.23" y="786.00" width="20.300" height="102.00" fill="#006580"/>
<rect x="400.20" y="799.10" width="20.300" height="88.90" fill="#006580"/>
<rect x="429.17" y="769.30" width="20.300" height="118.70" fill="#006580"/>
<rect x="458.13" y="817.90" width="20.300" height="70.10" fill="#006580"/>
<rect x="487.10" y="782.00" width="20.300" height="106.00" fill="#006580"/>
<rect x="516.07" y="784.00" width="20.300" height="104.00" fill="#006580"/>
<rect x="545.03" y="803.50" width="20.300" height="84.50" fill="#006580"/>
<rect x="574.00" y="789.70" width="20.300" height="98.30" fill="#006580"/>
<rect x="602.97" y="807.20" width="20.300" height="80.80" fill="#006580"/>
<rect x="631.93" y="760.90" width="20.300" height="127.10" fill="#006580"/>
<rect x="660.90" y="795.40" width="20.300" height="92.60" fill="#006580"/>
<rect x="689.87" y="769.30" width="20.300" height="118.70" fill="#006580"/>
<rect x="718.83" y="818.20" width="20.300" height="69.80" fill="#006580"/>
<rect x="747.80" y="789.70" width="20.300" height="98.30" fill="#006580"/>
<rect x="776.77" y="773.30" width="20.300" height="114.70" fill="#006580"/>
<rect x="805.73" y="812.90" width="20.300" height="75.10" fill="#006580"/>
<rect x="834.70" y="782.30" width="20.300" height="105.70" fill="#006580"/>
<rect x="863.67" y="774.30" width="20.300" height="113.70" fill="#006580"/>
<rect x="892.63" y="806.80" width="20.300" height="81.20" fill="#006580"/>
<rect x="921.60" y="786.30" width="20.300" height="101.70" fill="#006580"/>
<rect x="950.57" y="796.40" width="20.300" height="91.60" fill="#006580"/>
<rect x="979.53" y="773.30" width="20.300" height="114.70" fill="#006580"/>
<rect x="1008.50" y="799.10" width="20.300" height="88.90" fill="#006580"/>
<rect x="1037.47" y="782.30" width="20.300" height="105.70" fill="#006580"/>
<rect x="1066.43" y="788.30" width="20.300" height="99.70" fill="#006580"/>
<rect x="1095.40" y="789.30" width="20.300" height="98.70" fill="#006580"/>
<rect x="1124.37" y="785.00" width="20.300" height="103.00" fill="#006580"/>
<rect x="279" y="720" width="1" height="168" fill="#cccccc"/>
<rect x="1148" y="720" width="1" height="168" fill="#cccccc"/>
<rect x="271.5" y="720" width="7.5" height="1" fill="#cccccc"/>
<rect x="271.5" y="776" width="7.5" height="1" fill="#cccccc"/>
<rect x="271.5" y="832" width="7.5" height="1" fill="#cccccc"/>
<rect x="1149" y="720" width="8" height="1" fill="#cccccc"/>
<rect x="1149" y="804" width="8" height="1" fill="#cccccc"/>
<polyline points="294.48,832.00 323.45,811.20 352.42,805.20 381.38,814.60 410.35,816.90 439.32,801.80 468.28,796.50 497.25,811.90 526.22,803.50 555.18,825.30 584.15,822.60 613.12,789.80 642.08,794.80 671.05,785.40 700.02,797.10 728.98,777.00 757.95,785.40 786.92,788.10 815.88,772.60 844.85,780.40 873.82,793.10 902.78,789.80 931.75,798.50 960.72,791.80 989.68,783.00 1018.65,755.50 1047.62,773.30 1076.58,779.00 1105.55,778.70 1134.52,768.30" fill="none" stroke="#87205d" stroke-width="1.100"/>
<text x="252.80" y="731.00" font-size="11.4" fill="#595959" textLength="14.40" lengthAdjust="spacingAndGlyphs">6M</text>
<text x="252.80" y="780.60" font-size="11.4" fill="#595959" textLength="14.40" lengthAdjust="spacingAndGlyphs">4M</text>
<text x="252.80" y="836.60" font-size="11.4" fill="#595959" textLength="14.40" lengthAdjust="spacingAndGlyphs">2M</text>
<text x="260.86" y="892.00" font-size="11.4" fill="#595959">0</text>
<text x="1161.50" y="731.00" font-size="11.4" fill="#595959" textLength="11.80" lengthAdjust="spacingAndGlyphs">50</text>
<text x="1161.50" y="808.60" font-size="11.4" fill="#595959" textLength="11.80" lengthAdjust="spacingAndGlyphs">40</text>
<text x="1161.50" y="892.00" font-size="11.4" fill="#595959" textLength="11.80" lengthAdjust="spacingAndGlyphs">30</text>
<g transform="translate(298.48,898.80) rotate(-40)"><text x="-46.50" y="0.00" font-size="11.4" fill="#595959" textLength="46.50" lengthAdjust="spacingAndGlyphs">2012-Jan</text></g>
<g transform="translate(327.45,898.80) rotate(-40)"><text x="-46.50" y="0.00" font-size="11.4" fill="#595959" textLength="46.50" lengthAdjust="spacingAndGlyphs">2012-Feb</text></g>
<g transform="translate(356.42,898.80) rotate(-40)"><text x="-46.50" y="0.00" font-size="11.4" fill="#595959" textLength="46.50" lengthAdjust="spacingAndGlyphs">2012-Mar</text></g>
<g transform="translate(385.38,898.80) rotate(-40)"><text x="-46.50" y="0.00" font-size="11.4" fill="#595959" textLength="46.50" lengthAdjust="spacingAndGlyphs">2012-Apr</text></g>
<g transform="translate(414.35,898.80) rotate(-40)"><text x="-46.50" y="0.00" font-size="11.4" fill="#595959" textLength="46.50" lengthAdjust="spacingAndGlyphs">2012-May</text></g>
<g transform="translate(443.32,898.80) rotate(-40)"><text x="-46.50" y="0.00" font-size="11.4" fill="#595959" textLength="46.50" lengthAdjust="spacingAndGlyphs">2012-Jun</text></g>
<g transform="translate(472.28,898.80) rotate(-40)"><text x="-46.50" y="0.00" font-size="11.4" fill="#595959" textLength="46.50" lengthAdjust="spacingAndGlyphs">2012-Jul</text></g>
<g transform="translate(501.25,898.80) rotate(-40)"><text x="-46.50" y="0.00" font-size="11.4" fill="#595959" textLength="46.50" lengthAdjust="spacingAndGlyphs">2012-Aug</text></g>
<g transform="translate(530.22,898.80) rotate(-40)"><text x="-46.50" y="0.00" font-size="11.4" fill="#595959" textLength="46.50" lengthAdjust="spacingAndGlyphs">2012-Sep</text></g>
<g transform="translate(559.18,898.80) rotate(-40)"><text x="-46.50" y="0.00" font-size="11.4" fill="#595959" textLength="46.50" lengthAdjust="spacingAndGlyphs">2012-Oct</text></g>
<g transform="translate(588.15,898.80) rotate(-40)"><text x="-46.50" y="0.00" font-size="11.4" fill="#595959" textLength="46.50" lengthAdjust="spacingAndGlyphs">2012-Nov</text></g>
<g transform="translate(617.12,898.80) rotate(-40)"><text x="-46.50" y="0.00" font-size="11.4" fill="#595959" textLength="46.50" lengthAdjust="spacingAndGlyphs">2012-Dec</text></g>
<g transform="translate(646.08,898.80) rotate(-40)"><text x="-46.50" y="0.00" font-size="11.4" fill="#595959" textLength="46.50" lengthAdjust="spacingAndGlyphs">2013-Jan</text></g>
<g transform="translate(675.05,898.80) rotate(-40)"><text x="-46.50" y="0.00" font-size="11.4" fill="#595959" textLength="46.50" lengthAdjust="spacingAndGlyphs">2013-Feb</text></g>
<g transform="translate(704.02,898.80) rotate(-40)"><text x="-46.50" y="0.00" font-size="11.4" fill="#595959" textLength="46.50" lengthAdjust="spacingAndGlyphs">2013-Mar</text></g>
<g transform="translate(732.98,898.80) rotate(-40)"><text x="-46.50" y="0.00" font-size="11.4" fill="#595959" textLength="46.50" lengthAdjust="spacingAndGlyphs">2013-Apr</text></g>
<g transform="translate(761.95,898.80) rotate(-40)"><text x="-46.50" y="0.00" font-size="11.4" fill="#595959" textLength="46.50" lengthAdjust="spacingAndGlyphs">2013-May</text></g>
<g transform="translate(790.92,898.80) rotate(-40)"><text x="-46.50" y="0.00" font-size="11.4" fill="#595959" textLength="46.50" lengthAdjust="spacingAndGlyphs">2013-Jun</text></g>
<g transform="translate(819.88,898.80) rotate(-40)"><text x="-46.50" y="0.00" font-size="11.4" fill="#595959" textLength="46.50" lengthAdjust="spacingAndGlyphs">2013-Jul</text></g>
<g transform="translate(848.85,898.80) rotate(-40)"><text x="-46.50" y="0.00" font-size="11.4" fill="#595959" textLength="46.50" lengthAdjust="spacingAndGlyphs">2013-Aug</text></g>
<g transform="translate(877.82,898.80) rotate(-40)"><text x="-46.50" y="0.00" font-size="11.4" fill="#595959" textLength="46.50" lengthAdjust="spacingAndGlyphs">2013-Sep</text></g>
<g transform="translate(906.78,898.80) rotate(-40)"><text x="-46.50" y="0.00" font-size="11.4" fill="#595959" textLength="46.50" lengthAdjust="spacingAndGlyphs">2013-Oct</text></g>
<g transform="translate(935.75,898.80) rotate(-40)"><text x="-46.50" y="0.00" font-size="11.4" fill="#595959" textLength="46.50" lengthAdjust="spacingAndGlyphs">2013-Nov</text></g>
<g transform="translate(964.72,898.80) rotate(-40)"><text x="-46.50" y="0.00" font-size="11.4" fill="#595959" textLength="46.50" lengthAdjust="spacingAndGlyphs">2013-Dec</text></g>
<g transform="translate(993.68,898.80) rotate(-40)"><text x="-46.50" y="0.00" font-size="11.4" fill="#595959" textLength="46.50" lengthAdjust="spacingAndGlyphs">2014-Jan</text></g>
<g transform="translate(1022.65,898.80) rotate(-40)"><text x="-46.50" y="0.00" font-size="11.4" fill="#595959" textLength="46.50" lengthAdjust="spacingAndGlyphs">2014-Feb</text></g>
<g transform="translate(1051.62,898.80) rotate(-40)"><text x="-46.50" y="0.00" font-size="11.4" fill="#595959" textLength="46.50" lengthAdjust="spacingAndGlyphs">2014-Mar</text></g>
<g transform="translate(1080.58,898.80) rotate(-40)"><text x="-46.50" y="0.00" font-size="11.4" fill="#595959" textLength="46.50" lengthAdjust="spacingAndGlyphs">2014-Apr</text></g>
<g transform="translate(1109.55,898.80) rotate(-40)"><text x="-46.50" y="0.00" font-size="11.4" fill="#595959" textLength="46.50" lengthAdjust="spacingAndGlyphs">2014-May</text></g>
<g transform="translate(1138.52,898.80) rotate(-40)"><text x="-46.50" y="0.00" font-size="11.4" fill="#595959" textLength="46.50" lengthAdjust="spacingAndGlyphs">2014-Jun</text></g>
<text x="687.40" y="966.00" font-size="11.2" fill="#404040" textLength="54.00" lengthAdjust="spacingAndGlyphs">YearMonth</text>
<g transform="translate(237.39999999999998,804) rotate(-90)"><text x="-12.30" y="0.00" font-size="10.6" fill="#404040" textLength="24.60" lengthAdjust="spacingAndGlyphs">Sales</text></g>
<g transform="translate(1188.2,804) rotate(90)"><text x="-25.50" y="0.00" font-size="10.6" fill="#404040" textLength="51.00" lengthAdjust="spacingAndGlyphs">Margin (%)</text></g></svg>
</div>
<svg width="1550" height="1081" style="left:0;top:0;pointer-events:none"><path d="M0 1081V1073A8 8 0 0 0 8 1081Z" fill="#1c1816"/><path d="M1550 1081V1073A8 8 0 0 1 1542 1081Z" fill="#1c1816"/></svg>
</body></html>
